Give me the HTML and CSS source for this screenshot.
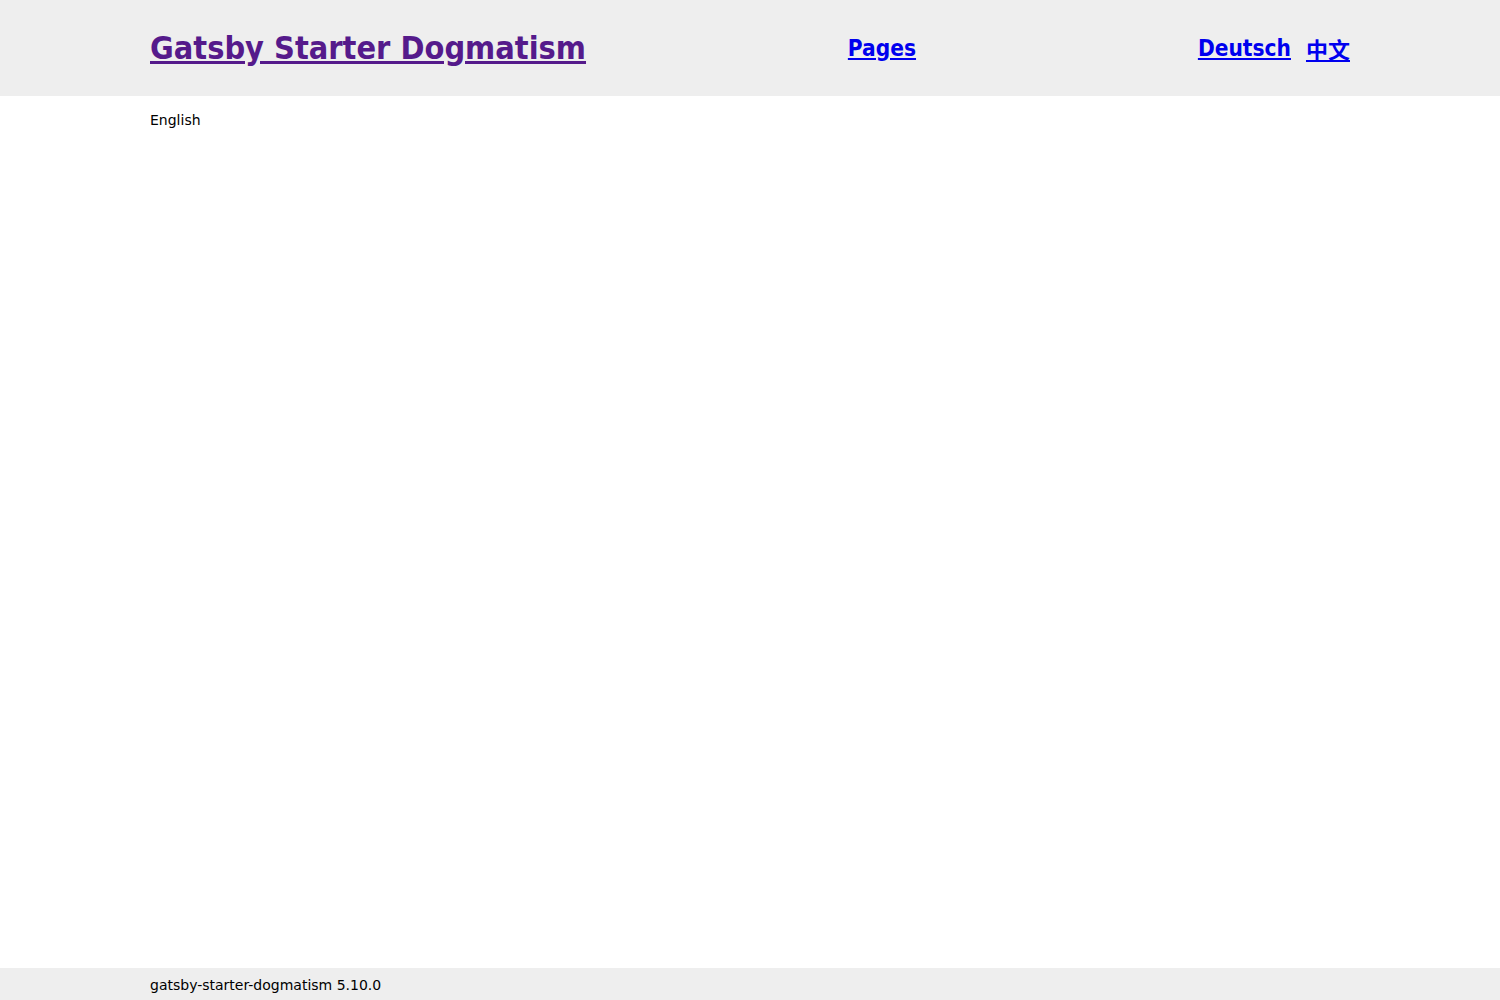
FILE: index.html
```html
<!DOCTYPE html>
<html lang="en">
<head>
<meta charset="utf-8">
<title>Gatsby Starter Dogmatism</title>
<link rel="stylesheet" href="styles.css">
</head>
<body>
<div class="page">
  <header class="header">
    <div class="container header-inner">
      <a class="site-title" href="#">Gatsby Starter Dogmatism</a>
      <nav class="nav"><a class="nav-link" href="#">Pages</a></nav>
      <div class="langs">
        <a class="nav-link" href="#">Deutsch</a>
        <a class="nav-link cjk" href="#">中文</a>
      </div>
    </div>
  </header>
  <main class="main">
    <div class="container">
      <p class="current-lang">English</p>
    </div>
  </main>
  <footer class="footer">
    <div class="container">gatsby-starter-dogmatism 5.10.0</div>
  </footer>
</div>
</body>
</html>
```

FILE: styles.css
```css
html, body {
  margin: 0;
  padding: 0;
  height: 100%;
}
body {
  font-family: "DejaVu Sans", "Noto Sans CJK SC", sans-serif;
  color: #000;
  background: #fff;
}
.page {
  min-height: 100%;
  display: flex;
  flex-direction: column;
}
.container {
  width: 1200px;
  margin: 0 auto;
}
.header {
  background: #eeeeee;
  height: 96px;
  display: flex;
  align-items: center;
}
.header-inner {
  display: flex;
  align-items: center;
  justify-content: space-between;
}
.site-title {
  font-family: "DejaVu Sans Condensed", "DejaVu Sans", sans-serif;
  font-stretch: condensed;
  font-size: 32.2px;
  font-weight: bold;
  color: #551a8b;
}
.nav {
  margin-right: 20px;
}
.nav-link {
  font-family: "DejaVu Sans Condensed", "DejaVu Sans", "Noto Sans CJK SC", sans-serif;
  font-stretch: condensed;
  font-size: 22.5px;
  font-weight: bold;
  color: #0000ee;
}
.nav-link.cjk {
  font-family: "Noto Sans CJK SC", sans-serif;
  font-stretch: normal;
  font-size: 22px;
}
.langs {
  display: flex;
  align-items: center;
  gap: 15px;
}
.main {
  flex: 1;
}
.current-lang {
  margin: 16px 0 0;
  font-size: 14px;
}
.footer {
  background: #eeeeee;
  height: 32px;
  display: flex;
  align-items: center;
  font-size: 14px;
}
.footer .container {
  padding-top: 1px;
}
```
